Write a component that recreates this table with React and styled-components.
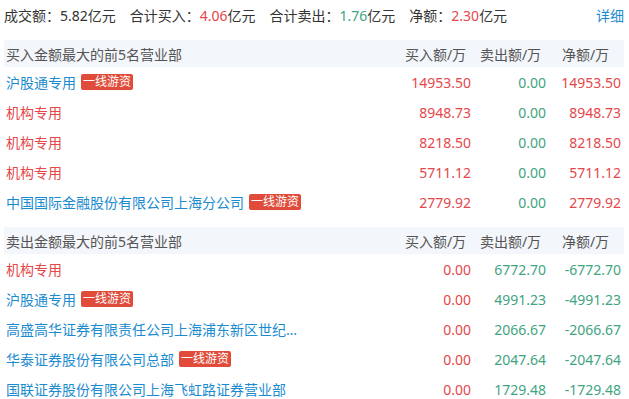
import React from "react";
import styled, { createGlobalStyle } from "styled-components";

const Global = createGlobalStyle`
  html, body { margin: 0; padding: 0; background: #fff; }
  body { font-family: "Noto Sans", "Noto Sans CJK SC", sans-serif; font-size: 14px; color: #333; }
`;

const RED = "#e5474b";
const GREEN = "#3fa47f";
const BLUE = "#1b8bd0";

const Page = styled.div`
  width: 620px;
  padding: 0 5px 0 4px;
`;

const Summary = styled.div`
  display: flex;
  align-items: center;
  height: 30px;
  margin-bottom: 10px;
  white-space: nowrap;
`;

const Stat = styled.span`
  margin-right: 14px;
`;

const Num = styled.span`
  color: ${(p) => p.$color};
`;

const Detail = styled.a`
  margin-left: auto;
  color: ${BLUE};
  text-decoration: none;
  cursor: pointer;
`;

const Section = styled.section`
  margin-bottom: 10px;
`;

const HeadRow = styled.div`
  display: flex;
  align-items: center;
  height: 27px;
  background: #f3f6fa;
  color: #555;
  padding: 0 3px 0 2px;
`;

const Row = styled.div`
  display: flex;
  align-items: center;
  height: 30px;
  padding: 0 3px 0 2px;
`;

const NameCell = styled.div`
  flex: 1;
  min-width: 0;
  display: flex;
  align-items: center;
  white-space: nowrap;
`;

const NameText = styled.span`
  color: ${(p) => (p.$inst ? RED : BLUE)};
  max-width: 292px;
  overflow: hidden;
  text-overflow: ellipsis;
  cursor: pointer;
`;

const Badge = styled.span`
  margin-left: 5px;
  height: 16px;
  line-height: 16px;
  padding: 0 2px;
  font-size: 12px;
  color: #fff;
  background: #e04b3a;
  border-radius: 2px;
`;

const Cell = styled.div`
  width: 75px;
  text-align: right;
  white-space: nowrap;
  color: ${(p) => p.$color};
`;

const HeadCell = styled.div`
  width: 75px;
  padding-left: 4px;
  box-sizing: border-box;
  text-align: center;
  white-space: nowrap;
`;

const buyRows = [
  { name: "沪股通专用", badge: true, buy: "14953.50", sell: "0.00", net: "14953.50" },
  { name: "机构专用", inst: true, buy: "8948.73", sell: "0.00", net: "8948.73" },
  { name: "机构专用", inst: true, buy: "8218.50", sell: "0.00", net: "8218.50" },
  { name: "机构专用", inst: true, buy: "5711.12", sell: "0.00", net: "5711.12" },
  { name: "中国国际金融股份有限公司上海分公司", badge: true, buy: "2779.92", sell: "0.00", net: "2779.92" },
];

const sellRows = [
  { name: "机构专用", inst: true, buy: "0.00", sell: "6772.70", net: "-6772.70" },
  { name: "沪股通专用", badge: true, buy: "0.00", sell: "4991.23", net: "-4991.23" },
  { name: "高盛高华证券有限责任公司上海浦东新区世纪大道证券营业部", buy: "0.00", sell: "2066.67", net: "-2066.67" },
  { name: "华泰证券股份有限公司总部", badge: true, buy: "0.00", sell: "2047.64", net: "-2047.64" },
  { name: "国联证券股份有限公司上海飞虹路证券营业部", buy: "0.00", sell: "1729.48", net: "-1729.48" },
];

function Table({ title, rows }) {
  return (
    <Section>
      <HeadRow>
        <NameCell>{title}</NameCell>
        <HeadCell>买入额/万</HeadCell>
        <HeadCell>卖出额/万</HeadCell>
        <HeadCell>净额/万</HeadCell>
      </HeadRow>
      {rows.map((r, i) => (
        <Row key={i}>
          <NameCell>
            <NameText $inst={r.inst}>{r.name}</NameText>
            {r.badge && <Badge>一线游资</Badge>}
          </NameCell>
          <Cell $color={RED}>{r.buy}</Cell>
          <Cell $color={GREEN}>{r.sell}</Cell>
          <Cell $color={r.net.startsWith("-") ? GREEN : RED}>{r.net}</Cell>
        </Row>
      ))}
    </Section>
  );
}

export default function App() {
  return (
    <Page>
      <Global />
      <Summary>
        <Stat>成交额：5.82亿元</Stat>
        <Stat>合计买入：<Num $color={RED}>4.06</Num>亿元</Stat>
        <Stat>合计卖出：<Num $color={GREEN}>1.76</Num>亿元</Stat>
        <Stat>净额：<Num $color={RED}>2.30</Num>亿元</Stat>
        <Detail>详细</Detail>
      </Summary>
      <Table title="买入金额最大的前5名营业部" rows={buyRows} />
      <Table title="卖出金额最大的前5名营业部" rows={sellRows} />
    </Page>
  );
}
